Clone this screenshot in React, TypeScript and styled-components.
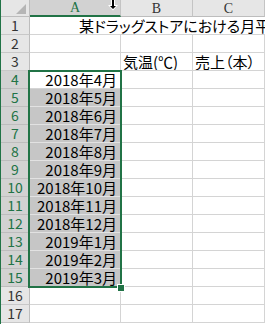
import React from 'react'
import styled, { createGlobalStyle } from 'styled-components'

const GlobalStyle = createGlobalStyle`
  html, body {
    margin: 0;
    padding: 0;
    background: #ffffff;
  }
  * {
    box-sizing: border-box;
  }
`

const GREEN = '#217346'

const Frame = styled.div`
  position: relative;
  width: 265px;
  height: 324px;
  overflow: hidden;
  border-left: 1px solid ${GREEN};
  background: #fff;
  font-family: 'Noto Sans CJK JP', 'Noto Sans', sans-serif;
`

const Sheet = styled.div`
  display: grid;
  grid-template-columns: 29px 91px 72px 72px;
  grid-template-rows: 17px repeat(17, 18px);
`

const Corner = styled.div`
  position: relative;
  background: #e6e6e6;
  border-right: 1px solid #bdbdbd;
  border-bottom: 1px solid #bdbdbd;

  &::after {
    content: '';
    position: absolute;
    right: 3px;
    bottom: 2px;
    width: 0;
    height: 0;
    border-left: 10px solid transparent;
    border-bottom: 10px solid #b5b5b5;
  }
`

const ColHeader = styled.div<{ $active?: boolean }>`
  display: flex;
  align-items: center;
  justify-content: center;
  background: ${({ $active }) => ($active ? '#d2d2d2' : '#e6e6e6')};
  border-right: 1px solid #c4c4c4;
  border-bottom: ${({ $active }) => ($active ? `2px solid ${GREEN}` : '1px solid #bdbdbd')};
  color: ${({ $active }) => ($active ? GREEN : '#333')};
  font-family: 'Liberation Serif', serif;
  font-size: 14px;
  padding-top: 1px;
`

const RowHeader = styled.div<{ $active?: boolean }>`
  display: flex;
  align-items: center;
  justify-content: center;
  background: ${({ $active }) => ($active ? '#d2d2d2' : '#e6e6e6')};
  border-right: 1px solid ${({ $active }) => ($active ? GREEN : '#bdbdbd')};
  border-bottom: 1px solid ${({ $active }) => ($active ? '#bdbdbd' : '#c8c8c8')};
  color: ${({ $active }) => ($active ? GREEN : '#333')};
  font-size: 14px;
  line-height: 17px;
`

const Cell = styled.div<{ $selected?: boolean; $align?: 'left' | 'right' }>`
  display: flex;
  align-items: center;
  justify-content: ${({ $align }) => ($align === 'right' ? 'flex-end' : 'flex-start')};
  padding: 0 3px 0 2px;
  background: ${({ $selected }) => ($selected ? '#c6c6c6' : '#fff')};
  border-right: 1px solid #d4d4d4;
  border-bottom: 1px solid ${({ $selected }) => ($selected ? '#e2e2e2' : '#d4d4d4')};
  color: #000;
  font-size: 15px;
  line-height: 17px;
  white-space: nowrap;
  overflow: hidden;
  font-feature-settings: 'palt';
`

const TitleCell = styled.div`
  grid-column: 2 / span 3;
  display: flex;
  align-items: center;
  padding-left: 49px;
  border-bottom: 1px solid #d4d4d4;
  font-size: 15px;
  line-height: 17px;
  white-space: nowrap;
  overflow: hidden;
  font-feature-settings: 'palt';
`

const Selection = styled.div`
  position: absolute;
  left: 27px;
  top: 70px;
  width: 94px;
  height: 218px;
  border: 2px solid ${GREEN};
  pointer-events: none;
`

const FillHandle = styled.div`
  position: absolute;
  left: 116px;
  top: 284px;
  width: 8px;
  height: 8px;
  background: ${GREEN};
  border: 1px solid #fff;
`

const Cursor = styled.svg`
  position: absolute;
  left: 106px;
  top: 0;
`

const months = [
  '2018年4月',
  '2018年5月',
  '2018年6月',
  '2018年7月',
  '2018年8月',
  '2018年9月',
  '2018年10月',
  '2018年11月',
  '2018年12月',
  '2019年1月',
  '2019年2月',
  '2019年3月',
]

export default function App() {
  const rows: React.ReactNode[] = []

  rows.push(
    <React.Fragment key="r1">
      <RowHeader>1</RowHeader>
      <TitleCell>某ドラッグストアにおける月平均気温と売上</TitleCell>
    </React.Fragment>
  )
  rows.push(
    <React.Fragment key="r2">
      <RowHeader>2</RowHeader>
      <Cell />
      <Cell />
      <Cell />
    </React.Fragment>
  )
  rows.push(
    <React.Fragment key="r3">
      <RowHeader>3</RowHeader>
      <Cell />
      <Cell>気温(℃)</Cell>
      <Cell>売上（本）</Cell>
    </React.Fragment>
  )
  months.forEach((m, i) => {
    rows.push(
      <React.Fragment key={m}>
        <RowHeader $active>{i + 4}</RowHeader>
        <Cell $align="right" $selected={i > 0}>
          {m}
        </Cell>
        <Cell />
        <Cell />
      </React.Fragment>
    )
  })
  ;[16, 17].forEach((n) => {
    rows.push(
      <React.Fragment key={n}>
        <RowHeader>{n}</RowHeader>
        <Cell />
        <Cell />
        <Cell />
      </React.Fragment>
    )
  })

  return (
    <>
      <GlobalStyle />
      <Frame>
        <Sheet>
          <Corner />
          <ColHeader $active>A</ColHeader>
          <ColHeader>B</ColHeader>
          <ColHeader>C</ColHeader>
          {rows}
        </Sheet>
        <Selection />
        <FillHandle />
        <Cursor width="12" height="11" viewBox="0 0 12 11">
          <path d="M4 0 H8 V5 H11 L6 10.5 L1 5 H4 Z" fill="#fff" />
          <path d="M5 0 H7 V6 H9 L6 9 L3 6 H5 Z" fill="#000" />
        </Cursor>
      </Frame>
    </>
  )
}
